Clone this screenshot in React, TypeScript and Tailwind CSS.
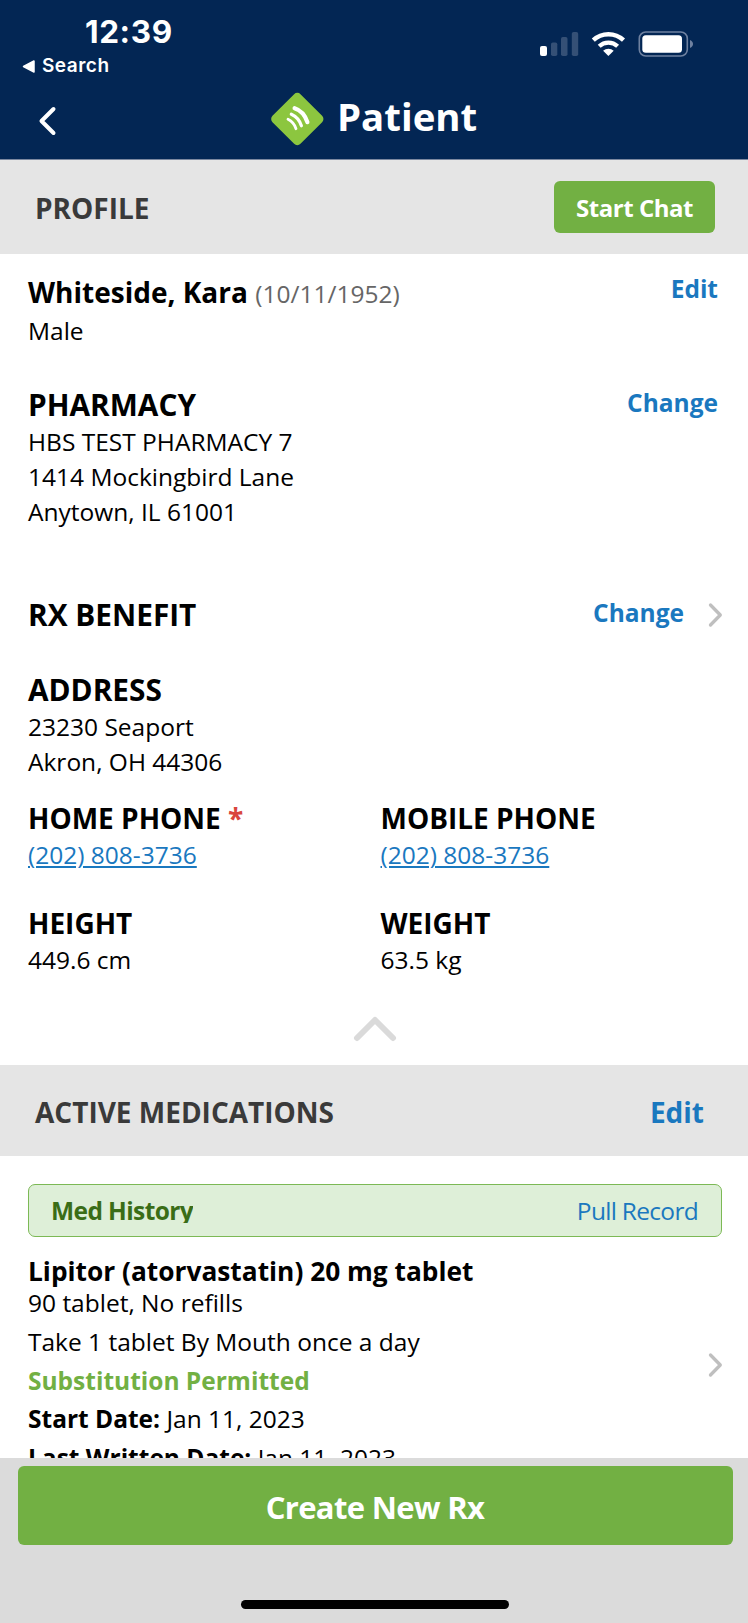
import React from 'react';

const phones = [
  { label: 'HOME PHONE', value: '(202) 808-3736', required: true },
  { label: 'MOBILE PHONE', value: '(202) 808-3736', required: false },
];

const vitals = [
  { label: 'HEIGHT', value: '449.6 cm' },
  { label: 'WEIGHT', value: '63.5 kg' },
];

function StatusIcons() {
  return (
    <svg width="156" height="28" viewBox="539 30 156 28" fill="none">
      {/* Signal */}
      <rect x="540" y="46" width="7" height="10" rx="2" fill="#fff" />
      <g fill="#355076">
        <rect x="551" y="42.5" width="6.3" height="13.5" rx="1.8" />
        <rect x="561" y="37" width="6.5" height="19" rx="1.8" />
        <rect x="571.8" y="32" width="6.4" height="24" rx="1.8" />
      </g>
      {/* Wifi */}
      <path d="M593.3 40.2a22 22 0 0 1 30.2 0" stroke="#fff" strokeWidth="4.4" />
      <path d="M599.2 46.3a13.4 13.4 0 0 1 18.4 0" stroke="#fff" strokeWidth="4.2" />
      <path d="M608.4 56l-5.3-5.2a8 8 0 0 1 10.6 0z" fill="#fff" />
      {/* Battery */}
      <rect x="639.3" y="32" width="48" height="24" rx="6.5" stroke="#6f81a0" strokeWidth="1.6" />
      <rect x="642.3" y="35.2" width="39.7" height="17.6" rx="3.5" fill="#fff" />
      <path d="M690 40c4 1.5 4 6.5 0 8z" fill="#6f81a0" />
    </svg>
  );
}

function Logo() {
  return (
    <svg width="54" height="54" viewBox="270 91.5 54 54" fill="none">
      <rect x="277.5" y="98.7" width="39.6" height="39.6" rx="4.5" transform="rotate(45 297.3 118.5)" fill="#8cc63f" />
      <g stroke="#fff" strokeLinecap="round">
        <path d="M294.6 107.7Q304 110.8 307.4 121.7" strokeWidth="4.2" />
        <path d="M291.3 113.7Q298.8 117 301.4 125.3" strokeWidth="3.2" />
        <path d="M288 118.8Q293.8 121.6 296 128.2" strokeWidth="2.8" />
      </g>
    </svg>
  );
}

function ChevronRight() {
  return (
    <svg width="16" height="26" viewBox="0 0 16 26" fill="none">
      <path d="M3.5 3L13.3 13L3.5 23" stroke="#bfbfbf" strokeWidth="3.3" strokeLinecap="round" strokeLinejoin="round" />
    </svg>
  );
}

export default function App() {
  return (
    <div className="flex h-[1623px] w-[748px] flex-col overflow-hidden bg-white font-['Open_Sans',sans-serif] text-[24.5px] leading-[35px] text-black">
      <header className="h-[160px] shrink-0 border-b border-[#7c88a0] bg-[#032654] text-white">
        <div className="flex h-[80px] justify-between pr-[53px] font-['Inter',sans-serif]">
          <div className="pt-[13px]">
            <div className="pl-[85px] text-[31.5px] leading-[37px] font-bold tracking-[0.6px]">12:39</div>
            <div className="flex items-center gap-[7px] pt-[1px] pl-[22px] text-[19px] leading-[30px] font-semibold tracking-[0.5px]">
              <svg width="13" height="13" viewBox="0 0 13 13">
                <path d="M12 1v11L1.5 6.5z" fill="#fff" stroke="#fff" strokeWidth="1.5" strokeLinejoin="round" />
              </svg>
              Search
            </div>
          </div>
          <div className="pt-[30px]">
            <StatusIcons />
          </div>
        </div>
        <div className="grid h-[77px] grid-cols-[270px_auto_1fr] items-center">
          <button className="pt-[5px] pl-[38px]">
            <svg width="20" height="30" viewBox="0 0 20 30" fill="none">
              <path d="M15.5 3L3.5 15L15.5 27" stroke="#fff" strokeWidth="4" strokeLinecap="round" strokeLinejoin="round" />
            </svg>
          </button>
          <Logo />
          <h1 className="pb-[6px] pl-[13px] text-[38.4px] leading-[44px] font-bold">Patient</h1>
        </div>
      </header>

      <div className="flex h-[94px] shrink-0 items-center justify-between bg-[#e5e5e5] pr-[33px] pl-[35px]">
        <h2 className="pt-[3px] text-[28px] font-bold text-[#3a3a3a]">PROFILE</h2>
        <button className="h-[52px] w-[161px] rounded-[6px] bg-[#72b043] text-[24px] font-bold tracking-[-0.45px] text-white">Start Chat</button>
      </div>

      <section className="flex h-[811px] shrink-0 flex-col pt-[19px] pr-[30px] pl-[28px]">
        <div className="flex items-start justify-between">
          <div className="leading-[38px]">
            <span className="text-[28px] font-bold">Whiteside, Kara</span>
            <span className="ml-[7.5px] text-[#666]">(10/11/1952)</span>
          </div>
          <a className="-mt-[2px] font-bold text-[#1a78bf]">Edit</a>
        </div>
        <p>Male</p>

        <div className="mt-[37px] flex justify-between">
          <h3 className="text-[29.8px] leading-[39px] font-bold">PHARMACY</h3>
          <a className="font-bold text-[#1a78bf]">Change</a>
        </div>
        <p>HBS TEST PHARMACY 7</p>
        <p>1414 Mockingbird Lane</p>
        <p>Anytown, IL 61001</p>

        <div className="mt-[66px] -mr-[5px] flex items-center">
          <h3 className="flex-1 text-[29.8px] leading-[39px] font-bold">RX BENEFIT</h3>
          <a className="mr-[23px] mb-[4px] font-bold text-[#1a78bf]">Change</a>
          <ChevronRight />
        </div>

        <h3 className="mt-[36px] text-[29.8px] leading-[39px] font-bold">ADDRESS</h3>
        <p>23230 Seaport</p>
        <p>Akron, OH 44306</p>

        <div className="mt-[20px] grid grid-cols-[352.5px_1fr]">
          {phones.map((p) => (
            <div key={p.label}>
              <h4 className="text-[28px] leading-[38px] font-bold">
                {p.label}
                {p.required && <span className="text-[#d9453d]"> *</span>}
              </h4>
              <a className="block text-[#1a78bf] underline decoration-[1.5px] underline-offset-[2px]">{p.value}</a>
            </div>
          ))}
        </div>
        <div className="mt-[32px] grid grid-cols-[352.5px_1fr]">
          {vitals.map((v) => (
            <div key={v.label}>
              <h4 className="text-[28px] leading-[38px] font-bold">{v.label}</h4>
              <p>{v.value}</p>
            </div>
          ))}
        </div>

        <div className="mt-[39px] flex justify-center pl-[4px]">
          <svg width="44" height="26" viewBox="0 0 44 26" fill="none">
            <path d="M4 22L22 4L40 22" stroke="#dadada" strokeWidth="6" strokeLinecap="round" strokeLinejoin="round" />
          </svg>
        </div>
      </section>

      <div className="flex h-[91px] shrink-0 items-center justify-between bg-[#e5e5e5] pt-[4px] pr-[44px] pl-[35px] text-[28px] font-bold">
        <h2 className="text-[#3a3a3a]">ACTIVE MEDICATIONS</h2>
        <a className="text-[#1a78bf]">Edit</a>
      </div>

      <section className="min-h-0 flex-1 overflow-hidden pt-[28px] pr-[26px] pl-[28px]">
        <div className="flex h-[53px] items-center justify-between rounded-[7px] border-[1.5px] border-[#7cb955] bg-[#deefd8] pr-[23px] pl-[22px]">
          {/* label box is shorter than the line, so the descender is cut */}
          <span className="mb-[3px] h-[27px] overflow-hidden text-[24.5px] leading-[29px] font-bold tracking-[-0.6px] text-[#3a6d17]">Med History</span>
          <a className="tracking-[-0.7px] text-[#1a78bf]">Pull Record</a>
        </div>
        <div className="mt-[16px] flex items-start justify-between">
          <div>
            <h3 className="text-[26.3px] leading-[36px] font-bold">Lipitor (atorvastatin) 20 mg tablet</h3>
            <p className="leading-[28px]">90 tablet, No refills</p>
            <div className="mt-[6px] leading-[38.5px]">
              <p>Take 1 tablet By Mouth once a day</p>
              <p className="font-bold text-[#72b043]">Substitution Permitted</p>
              <p><b>Start Date:</b> Jan 11, 2023</p>
              <p><b>Last Written Date:</b> Jan 11, 2023</p>
            </div>
          </div>
          <div className="mt-[99px] -mr-[1px]">
            <ChevronRight />
          </div>
        </div>
      </section>

      <footer className="flex h-[165px] shrink-0 flex-col items-center bg-[#dbdbdb] pt-[8px] pl-[2px]">
        <button className="h-[79px] w-[715px] rounded-[6px] bg-[#72b043] pt-[3px] text-[31px] font-bold tracking-[-0.65px] text-white">Create New Rx</button>
        <div className="mt-[55px] h-[9px] w-[268px] rounded-full bg-black" />
      </footer>
    </div>
  );
}
